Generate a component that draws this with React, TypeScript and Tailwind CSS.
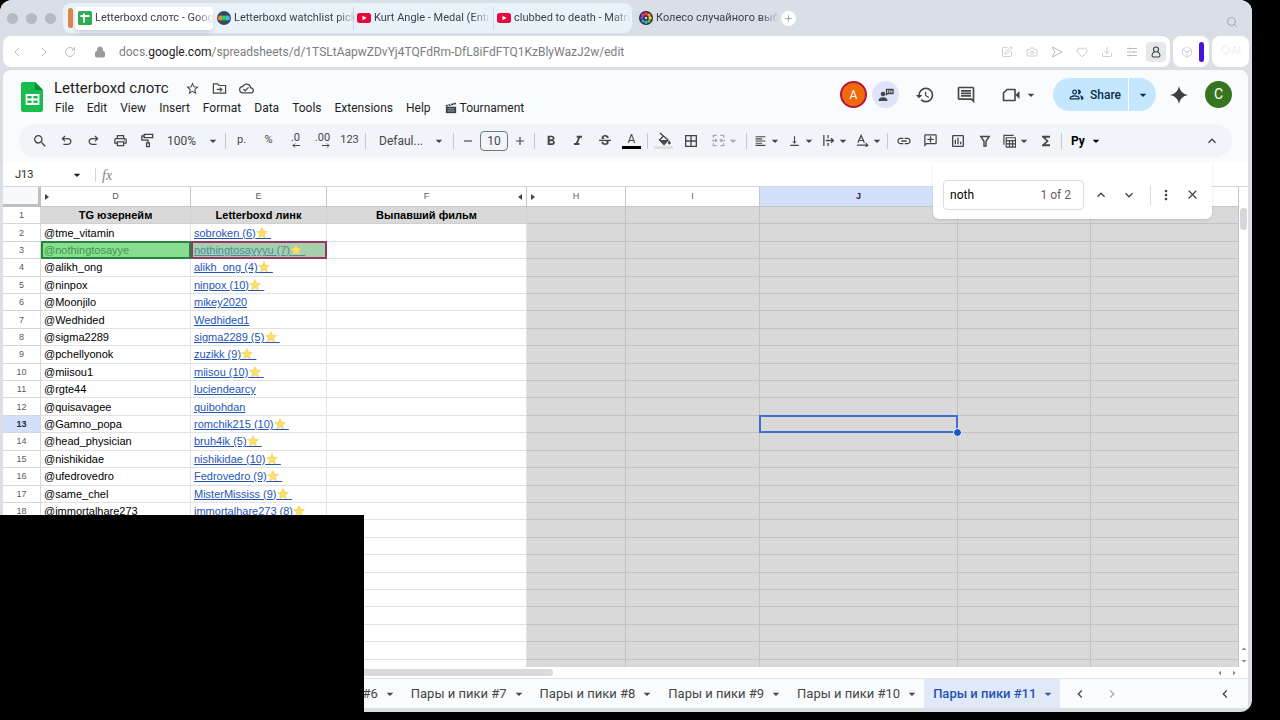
import React, { useState } from 'react';
import {
  MdArrowDropDown, MdBorderAll, MdClose, MdFormatAlignLeft, MdFormatBold, MdFormatItalic,
  MdFunctions, MdHistory, MdKeyboardArrowDown, MdKeyboardArrowUp, MdMoreVert, MdOutlineAddComment,
  MdOutlineCloudDone, MdOutlineInsertChart, MdOutlineInsertComment, MdOutlinePeopleAlt,
  MdOutlinePrint, MdSearch, MdStarOutline, MdStrikethroughS, MdVerticalAlignBottom, MdLink, MdChevronLeft,
  MdChevronRight, MdAdd, MdRemove,
} from 'react-icons/md';
import { Box, Camera, ChevronLeft, ChevronRight, Download, Heart, Lock, RotateCw, Search, SquarePen } from 'lucide-react';

type Row = { tg?: string; link?: string; star?: boolean };

const rows: Row[] = [
  { tg: '@tme_vitamin', link: 'sobroken (6)', star: true },
  { tg: '@nothingtosayye', link: 'nothingtosayyyu (7)', star: true },
  { tg: '@alikh_ong', link: 'alikh_ong (4)', star: true },
  { tg: '@ninpox', link: 'ninpox (10)', star: true },
  { tg: '@Moonjilo', link: 'mikey2020' },
  { tg: '@Wedhided', link: 'Wedhided1' },
  { tg: '@sigma2289', link: 'sigma2289 (5)', star: true },
  { tg: '@pchellyonok', link: 'zuzikk (9)', star: true },
  { tg: '@miisou1', link: 'miisou (10)', star: true },
  { tg: '@rgte44', link: 'luciendearcy' },
  { tg: '@quisavagee', link: 'quibohdan' },
  { tg: '@Gamno_popa', link: 'romchik215 (10)', star: true },
  { tg: '@head_physician', link: 'bruh4ik (5)', star: true },
  { tg: '@nishikidae', link: 'nishikidae (10)', star: true },
  { tg: '@ufedrovedro', link: 'Fedrovedro (9)', star: true },
  { tg: '@same_chel', link: 'MisterMississ (9)', star: true },
  { tg: '@immortalhare273', link: 'immortalhare273 (8)', star: true },
  {}, {}, {}, {}, {}, {}, {}, {}, {},
];

const menus = ['File', 'Edit', 'View', 'Insert', 'Format', 'Data', 'Tools', 'Extensions', 'Help'];
const sheets = ['Пары и пики #6', 'Пары и пики #7', 'Пары и пики #8', 'Пары и пики #9', 'Пары и пики #10', 'Пары и пики #11'];

const Star = () => (
  <svg viewBox="0 0 24 24" className="absolute right-[3px] top-0 h-3 w-3">
    <path d="M12 1l3.2 7.2 7.8.8-5.900 5.200 1.700 7.800L12 18l-6.800 4 1.700-7.800L1 9l7.800-.8z" fill="#fbe06a" stroke="#ecc956" strokeWidth="1" />
  </svg>
);

const YouTube = () => (
  <svg viewBox="0 0 14 10" className="h-[10px] w-[14px] shrink-0">
    <rect width="14" height="10" rx="2.500" fill="#e5083c" />
    <path d="M5.500 2.700v4.600l4-2.300z" fill="#fff" />
  </svg>
);

const SheetsFavicon = () => (
  <svg viewBox="0 0 14 14" className="h-[14px] w-[14px] shrink-0">
    <rect width="14" height="14" rx="1.500" fill="#2fae55" />
    <path d="M2.500 5h9M6 2.500v9" stroke="#fff" strokeWidth="1.800" />
  </svg>
);

const LetterboxdIcon = () => (
  <svg viewBox="0 0 14 14" className="h-[14px] w-[14px] shrink-0">
    <circle cx="7" cy="7" r="7" fill="#3d4a5e" />
    <circle cx="3.600" cy="7" r="2.500" fill="#f28a2c" />
    <circle cx="10.400" cy="7" r="2.500" fill="#3fb6ee" />
    <circle cx="7" cy="7" r="2.500" fill="#26d05c" />
  </svg>
);

const wheelColors = ['#e8413c', '#f29a2e', '#f4dd3a', '#5cc04a', '#36b5a2', '#3a8ee0', '#6a4bd0', '#d63fae'];
const WheelIcon = () => (
  <svg viewBox="0 0 14 14" className="h-[14px] w-[14px] shrink-0">
    <circle cx="7" cy="7" r="7" fill="#2a2530" />
    {wheelColors.map((c, i) => (
      <circle key={c} cx="7" cy="2.800" r="1.700" fill={c} transform={`rotate(${i * 45} 7 7)`} />
    ))}
    <circle cx="7" cy="7" r="1.300" fill="#d8d8d8" />
  </svg>
);

const SheetsLogo = () => (
  <svg viewBox="0 0 22 30" className="h-[30px] w-[22px]">
    <path d="M2 0h12l8 8v20a2 2 0 0 1-2 2H2a2 2 0 0 1-2-2V2a2 2 0 0 1 2-2z" fill="#17bd4d" />
    <path d="M14 0l8 8h-8z" fill="#0b8f38" />
    <path d="M5.500 13h12v9h-12zM5.500 17.500h12M11.500 13v9" fill="none" stroke="#fff" strokeWidth="1.800" />
  </svg>
);

const MoveFolder = () => (
  <svg viewBox="0 0 16 16" fill="none" stroke="currentColor" strokeWidth="1.300" className="h-[15px] w-[15px]">
    <path d="M1.500 3h4.500l1.500 1.800h7V13h-13zM5 9h5.500M8.500 7l2 2-2 2" />
  </svg>
);

const Clapper = () => (
  <svg viewBox="0 0 14 14" className="h-3 w-3">
    <path d="M1 5.500h12V13H1z" fill="#3c4043" />
    <path d="M.6 3.800L12.400.6l.6 2L1.200 5.600z" fill="#3c4043" />
    <path d="M3 3.200l1.500 1.500M6 2.400l1.500 1.500M9 1.600l1.500 1.500" stroke="#fff" strokeWidth="1" />
    <path d="M3 8h8M3 10.500h8" stroke="#c8ccd0" strokeWidth=".8" />
  </svg>
);

const Undo = ({ flip }: { flip?: boolean }) => (
  <svg viewBox="0 -960 960 960" fill="currentColor" className={`h-[15px] w-[15px] ${flip ? '-scale-x-100' : ''}`}>
    <path d="M280-200v-80h284q63 0 109.500-40T720-420q0-60-46.500-100T564-560H312l104 104-56 56-200-200 200-200 56 56-104 104h252q97 0 169.500 63T800-420q0 94-72.500 157T564-200H280Z" />
  </svg>
);

const Roller = () => (
  <svg viewBox="0 0 16 16" fill="none" stroke="currentColor" strokeWidth="1.400" className="h-[15px] w-[15px]">
    <path d="M4.500 1.500h9v3.500h-9zM4.500 3.200H2v4.300h6.500V10M7 10.500h3v4H7z" />
  </svg>
);

const Decimals = ({ text, more }: { text: string; more?: boolean }) => (
  <span className="flex flex-col items-end text-[11px] leading-[10px]">
    {text}
    <svg viewBox="0 0 8 5" fill="none" stroke="currentColor" className={`h-[5px] w-2 ${more ? '-scale-x-100' : ''}`}>
      <path d="M8 2.500H1M3 .5l-2 2 2 2" />
    </svg>
  </span>
);

const Bucket = () => (
  <svg viewBox="0 0 14 14" className="h-[14px] w-[14px]">
    <path d="M3 1l8 7-4 4.500L2.500 8 6.500 4" fill="none" stroke="currentColor" strokeWidth="1.400" />
    <path d="M3 8h7.500L7 12z" fill="currentColor" />
    <path d="M12.300 8.500c.9 1.200 1.400 1.800 1.400 2.500a1.400 1.400 0 0 1-2.800 0c0-.7.500-1.300 1.400-2.500z" fill="currentColor" />
  </svg>
);

const Merge = () => (
  <svg viewBox="0 0 14 14" fill="none" stroke="currentColor" strokeWidth="1.400" className="h-[13px] w-[13px]">
    <path d="M5 1.500H1.500V4M9 1.500h3.500V4M5 12.500H1.500V10M9 12.500h3.500V10M0 7h5M14 7H9M3.500 5.300L5.200 7 3.500 8.700M10.500 5.300L8.800 7l1.700 1.700" />
  </svg>
);

const Wrap = () => (
  <svg viewBox="0 0 14 14" fill="none" stroke="currentColor" strokeWidth="1.400" className="h-[13px] w-[13px]">
    <path d="M2 1v12M6.500 1v3.500M6.500 9.500V13M4 7h8M9.800 4.500L12.300 7 9.800 9.500" />
  </svg>
);

const Rotate = () => (
  <svg viewBox="0 0 14 14" fill="none" stroke="currentColor" strokeWidth="1.300" className="h-[13px] w-[13px]">
    <path d="M2 9.500L5.500 1.500 9 9.500M3.200 7h4.600M1 12h11.500M10.500 9.800L12.700 12l-2.200 2" />
  </svg>
);

const Funnel = () => (
  <svg viewBox="0 0 14 14" fill="none" stroke="currentColor" strokeWidth="1.400" className="h-[14px] w-[14px]">
    <path d="M2.800 2.500h8.400L8 7.300V12H6V7.300z" />
  </svg>
);

const TableViews = () => (
  <svg viewBox="0 0 14 14" fill="none" stroke="currentColor" strokeWidth="1.300" className="h-[14px] w-[14px]">
    <path d="M1 11V1h10.500M3.500 3.500h10v10h-10zM3.500 6.500h10M3.500 10h10M7 6.500v7M10.300 6.500v7" />
  </svg>
);

const VideoCall = () => (
  <svg viewBox="0 0 18 16" className="h-4 w-[18px]">
    <path d="M5 2.500h8v11H1.500V6z" fill="none" stroke="currentColor" strokeWidth="1.600" strokeLinejoin="round" />
    <path d="M13.500 8L17.500 4v8z" fill="currentColor" />
  </svg>
);

const MeetPeople = () => (
  <svg viewBox="0 0 16 14" fill="currentColor" className="h-[14px] w-4">
    <circle cx="5" cy="6" r="2.300" />
    <path d="M.5 13c0-2.800 2-3.800 4.500-3.800s4.500 1 4.500 3.800z" />
    <path d="M8.500 1.500h6.500v4h-5l-1.500 1z" fill="none" stroke="currentColor" strokeWidth="1.300" />
    <path d="M10.700 2v3M12.800 2v3" stroke="currentColor" />
  </svg>
);

const Send = () => (
  <svg viewBox="0 0 12 12" fill="none" stroke="currentColor" strokeLinejoin="round" className="h-3 w-3">
    <path d="M1.500 1L11 6l-9.500 5L3.500 6z" />
  </svg>
);

const Tune = () => (
  <svg viewBox="0 0 12 12" fill="none" stroke="currentColor" className="h-3 w-3">
    <path d="M1 2.500h10M1 6h10M1 9.500h10M4 1.500v2M8 5v2M4 8.500v2" />
  </svg>
);

const Person = () => (
  <svg viewBox="0 0 12 12" fill="none" stroke="currentColor" strokeWidth="1.100" className="h-3 w-3">
    <circle cx="6" cy="3.500" r="2.500" />
    <path d="M4.500 5.700C2.700 6.500 2 8 2 9.500c0 1 .6 1.500 1.500 1.500h5c.9 0 1.500-.5 1.500-1.500 0-1.500-.7-3-2.500-3.800" />
  </svg>
);

const Arrow = () => <MdArrowDropDown className="h-4 w-4 shrink-0" />;

const Sep = () => <span className="mx-[2px] h-4 w-px shrink-0 bg-[#c7c9cc]" />;

const Tool = ({ label, children }: { label: string; children: React.ReactNode }) => (
  <button aria-label={label} className="flex h-[27px] w-[27px] shrink-0 items-center justify-center text-[11px]">
    {children}
  </button>
);

const ToolMenu = ({ label, children }: { label: string; children: React.ReactNode }) => (
  <button aria-label={label} className="flex h-[27px] w-[34px] shrink-0 items-center justify-between pl-[5px]">
    {children}
    <Arrow />
  </button>
);

const BrowserTab = ({ icon, title, active }: { icon: React.ReactNode; title: string; active?: boolean }) => (
  <button className={`flex h-[23px] w-[138px] shrink-0 items-center gap-[3px] rounded px-[3px] text-[11px] text-[#3a3f47] ${active ? 'bg-white shadow-md' : ''}`}>
    {icon}
    <span className="whitespace-nowrap text-left [mask-image:linear-gradient(to_right,black_85%,transparent)]">{title}</span>
  </button>
);

const Browser = () => (
  <div>
    <div className="flex h-9 items-center bg-[#d8dfe7] pl-[7px] pr-[14px]">
      <div className="flex gap-2">
        <span className="h-[11px] w-[11px] rounded-full bg-[#b3bac6]" />
        <span className="h-[11px] w-[11px] rounded-full bg-[#b3bac6]" />
        <span className="h-[11px] w-[11px] rounded-full bg-[#b3bac6]" />
      </div>
      <div className="ml-[7px] flex h-[30px] items-center gap-px rounded-lg bg-[#e9f2fb] pl-[5px]">
        <span className="mr-px h-5 w-[5px] rounded-sm bg-[#dd8448]" />
        <BrowserTab active icon={<SheetsFavicon />} title="Letterboxd слотс - Goog" />
        <BrowserTab icon={<LetterboxdIcon />} title="Letterboxd watchlist pick" />
        <div className="border-l border-[#cdd5dd]">
          <BrowserTab icon={<YouTube />} title="Kurt Angle - Medal (Entr" />
        </div>
        <div className="border-l border-[#cdd5dd]">
          <BrowserTab icon={<YouTube />} title="clubbed to death - Matri" />
        </div>
      </div>
      <div className="ml-1">
        <BrowserTab icon={<WheelIcon />} title="Колесо случайного выб" />
      </div>
      <button aria-label="New tab" className="ml-[7px] flex h-[15px] w-[15px] items-center justify-center rounded-full bg-white text-[#9aa0a6]">
        <MdAdd className="h-[11px] w-[11px]" />
      </button>
      <Search className="ml-auto mt-2 h-3 w-3 text-[#a0a7b0]" strokeWidth={2} />
    </div>
    <div className="flex h-[34px] gap-[3px] bg-[#dcdee6] pb-[3px] pl-[3px] pr-[3px]">
      <div className="flex flex-1 items-center rounded-lg bg-white pl-[6px] pr-1 text-[#b9bcc1]">
        <ChevronLeft className="mr-[11px] h-4 w-4" strokeWidth={1.5} />
        <ChevronRight className="mr-3 h-4 w-4" strokeWidth={1.5} />
        <RotateCw className="mr-[18px] h-3 w-3" strokeWidth={2} />
        <Lock className="mr-[13px] h-3 w-3 text-[#9a9a9a]" fill="#9a9a9a" />
        <span className="flex-1 text-[12px] text-[#7b7d80]">
          docs.<span className="text-[#202124]">google.com</span>/spreadsheets/d/1TSLtAapwZDvYj4TQFdRm-DfL8iFdFTQ1KzBlyWazJ2w/edit
        </span>
        <div className="flex items-center gap-[13px]">
          <SquarePen className="h-3 w-3" strokeWidth={1.5} />
          <Camera className="h-3 w-3" strokeWidth={1.5} />
          <Send />
          <Heart className="h-3 w-3" strokeWidth={1.5} />
          <Download className="h-3 w-3" strokeWidth={1.5} />
          <Tune />
        </div>
        <span className="ml-2 flex h-5 w-5 items-center justify-center rounded bg-[#e6e8ec] text-[#3c4043]">
          <Person />
        </span>
      </div>
      <div className="flex w-9 items-center justify-end gap-[6px] rounded-lg bg-white pr-[5px]">
        <Box className="h-3 w-3 text-[#c3c6ca]" strokeWidth={1.5} />
        <span className="h-5 w-[5px] rounded-sm bg-[#4a12e0]" />
      </div>
      <div className="flex w-[37px] items-center justify-center rounded-lg bg-white text-[11px] text-[#eeeeee]">◇AI</div>
    </div>
  </div>
);

const Header = () => (
  <header className="flex h-[54px] items-center pl-[18px] pr-4 text-[#1f1f1f]">
    <SheetsLogo />
    <div className="ml-[6px] flex flex-col pt-[2px]">
      <div className="flex h-5 items-center pl-[5px]">
        <h1 className="text-[15px] leading-5">Letterboxd слотс</h1>
        <div className="ml-4 flex items-center gap-3 text-[#444746]">
          <MdStarOutline className="h-[15px] w-[15px]" />
          <MoveFolder />
          <MdOutlineCloudDone className="h-[15px] w-[15px]" />
        </div>
      </div>
      <nav className="flex h-5 items-center gap-px text-[12px]">
        {menus.map((m) => (
          <button key={m} className="px-[6px]">{m}</button>
        ))}
        <button className="flex items-center gap-[3px] px-[7px]"><Clapper />Tournament</button>
      </nav>
    </div>
    <div className="ml-auto flex items-center pb-[5px] text-[#444746]">
      <span className="flex h-[27px] w-[27px] items-center justify-center rounded-full border-2 border-[#b4123f] bg-[#ee6a0c] text-[12px] text-white">A</span>
      <button aria-label="People here" className="ml-[5px] flex h-[27px] w-[27px] items-center justify-center rounded-full bg-[#dfe4f8]"><MeetPeople /></button>
      <button aria-label="History" className="ml-4"><MdHistory className="h-5 w-5" /></button>
      <button aria-label="Comments" className="ml-[21px]"><MdOutlineInsertComment className="h-5 w-5" /></button>
      <button aria-label="Meet" className="ml-[26px] flex items-center gap-[3px]"><VideoCall /><Arrow /></button>
      <div className="ml-[14px] flex h-[33px] rounded-full bg-[#c5e7fe] text-[#0a2f4e]">
        <button className="flex w-[76px] items-center justify-end gap-[6px] border-r border-white pr-[7px] text-[12px] font-medium">
          <MdOutlinePeopleAlt className="h-[15px] w-[15px]" />Share
        </button>
        <button aria-label="Share options" className="flex w-[27px] items-center justify-center"><Arrow /></button>
      </div>
      <svg viewBox="0 0 18 18" className="ml-[14px] h-[18px] w-[18px]" fill="#3c4043">
        <path d="M9 0c1 5.200 3.800 8 9 9-5.200 1-8 3.800-9 9-1-5.200-3.800-8-9-9 5.200-1 8-3.800 9-9z" />
      </svg>
      <span className="ml-[17px] flex h-[27px] w-[27px] items-center justify-center rounded-full bg-[#35761f] text-[14px] text-white">C</span>
    </div>
  </header>
);

const Toolbar = () => (
  <div className="mx-4 flex h-[33px] items-center rounded-full bg-[#f1f4f9] pl-[7px] text-[#444746]">
    <Tool label="Search the menus"><MdSearch className="h-4 w-4" /></Tool>
    <Tool label="Undo"><Undo /></Tool>
    <Tool label="Redo"><Undo flip /></Tool>
    <Tool label="Print"><MdOutlinePrint className="h-[15px] w-[15px]" /></Tool>
    <Tool label="Paint format"><Roller /></Tool>
    <button className="flex w-[62px] items-center justify-between pl-[6px] pr-[2px] text-[12px]">100%<Arrow /></button>
    <Sep />
    <Tool label="Currency">р.</Tool>
    <Tool label="Percent">%</Tool>
    <Tool label="Decrease decimals"><Decimals text=".0" /></Tool>
    <Tool label="Increase decimals"><Decimals text=".00" more /></Tool>
    <Tool label="Formats">123</Tool>
    <Sep />
    <button className="flex w-[83px] items-center justify-between pl-[11px] pr-1 text-[12px]">Defaul...<Arrow /></button>
    <Sep />
    <button aria-label="Decrease font size" className="flex w-6 justify-center"><MdRemove className="h-[14px] w-[14px]" /></button>
    <input aria-label="Font size" defaultValue="10" className="h-5 w-7 rounded border border-[#747775] text-center text-[12px]" />
    <button aria-label="Increase font size" className="flex w-6 justify-center"><MdAdd className="h-[14px] w-[14px]" /></button>
    <Sep />
    <Tool label="Bold"><MdFormatBold className="h-4 w-4" /></Tool>
    <Tool label="Italic"><MdFormatItalic className="h-4 w-4" /></Tool>
    <Tool label="Strikethrough"><MdStrikethroughS className="h-4 w-4" /></Tool>
    <Tool label="Text color"><span className="w-[19px] border-b-[3px] border-black text-center text-[12px] leading-[14px]">A</span></Tool>
    <Sep />
    <Tool label="Fill color"><span className="flex w-[19px] justify-center border-b-[3px] border-[#dfe1e4]"><Bucket /></span></Tool>
    <Tool label="Borders"><MdBorderAll className="h-4 w-4" /></Tool>
    <span className="flex w-10 justify-center text-[#a9acb0]"><ToolMenu label="Merge cells"><Merge /></ToolMenu></span>
    <Sep />
    <ToolMenu label="Horizontal align"><MdFormatAlignLeft className="h-4 w-4" /></ToolMenu>
    <ToolMenu label="Vertical align"><MdVerticalAlignBottom className="h-4 w-4" /></ToolMenu>
    <ToolMenu label="Text wrapping"><Wrap /></ToolMenu>
    <ToolMenu label="Text rotation"><Rotate /></ToolMenu>
    <Sep />
    <Tool label="Insert link"><MdLink className="h-4 w-4" /></Tool>
    <Tool label="Insert comment"><MdOutlineAddComment className="h-[15px] w-[15px] -scale-x-100" /></Tool>
    <Tool label="Insert chart"><MdOutlineInsertChart className="h-4 w-4" /></Tool>
    <Tool label="Filter"><Funnel /></Tool>
    <ToolMenu label="Table views"><TableViews /></ToolMenu>
    <Tool label="Functions"><MdFunctions className="h-4 w-4" /></Tool>
    <Sep />
    <button className="ml-[7px] flex items-center gap-[3px] text-[12px] font-bold text-black">Py<Arrow /></button>
    <button aria-label="Hide the menus" className="ml-auto pr-3"><MdKeyboardArrowUp className="h-4 w-4" /></button>
  </div>
);

const FindBar = () => {
  const [query, setQuery] = useState('noth');

  return (
    <div className="absolute right-9 top-[92px] z-20 flex h-[57px] w-[279px] items-center rounded-b-md bg-white pl-[10px] pr-3 pt-2 text-[#444746] shadow">
      <label className="flex h-[30px] w-[141px] items-center rounded border border-[#dadce0] px-[6px] text-[12px]">
        <input aria-label="Find in sheet" value={query} onChange={(e) => setQuery(e.target.value)} className="w-16 text-black outline-none" />
        <span className="ml-auto pr-[6px] text-[#5f6368]">1 of 2</span>
      </label>
      <button aria-label="Previous" className="ml-[9px]"><MdKeyboardArrowUp className="h-4 w-4" /></button>
      <button aria-label="Next" className="ml-3"><MdKeyboardArrowDown className="h-4 w-4" /></button>
      <span className="ml-[13px] h-5 w-px bg-[#dadce0]" />
      <button aria-label="More options" className="ml-[7px]"><MdMoreVert className="h-4 w-4" /></button>
      <button aria-label="Close" className="ml-auto"><MdClose className="h-[15px] w-[15px]" /></button>
    </div>
  );
};

const head = 'relative border-b border-r border-[#c4c7c5] bg-white p-0 text-[9px] font-normal text-[#575b5f]';
const rowHead = 'border-b border-r border-[#d5d7da] p-0 text-center text-[9px] leading-[14px]';
const cell = 'relative whitespace-nowrap border-b border-r border-[#e1e1e1] p-0 pl-[3px] leading-[14px]';
const gray = 'relative border-b border-r border-[#c3c3c3] bg-[#d9d9d9] p-0';
const title = 'border-b border-r border-[#d0d0d0] bg-[#d9d9d9] p-0 text-center font-bold leading-[14px]';
const tri = 'absolute top-[7px] h-[6px] w-1 fill-[#444746]';

const Grid = () => (
  <div className="flex min-h-0 flex-1">
    <div className="min-w-0 flex-1 overflow-hidden">
      <table className="h-[490px] w-full table-fixed border-separate border-spacing-0 font-['Liberation_Sans',Arial,sans-serif] text-[11px] text-black">
        <colgroup>
          <col className="w-[38px]" />
          <col className="w-[150px]" />
          <col className="w-[136px]" />
          <col className="w-[200px]" />
          <col className="w-[99px]" />
          <col className="w-[134px]" />
          <col className="w-[198px]" />
          <col className="w-[133px]" />
          <col />
        </colgroup>
        <thead>
          <tr className="h-5">
            <th className="border-b-[3px] border-r-[3px] border-[#bdbfc2] bg-[#f8f9fa] p-0" />
            <th className={head}>D<svg viewBox="0 0 4 6" className={`${tri} left-1`}><path d="M0 0l4 3-4 3z" /></svg></th>
            <th className={head}>E</th>
            <th className={head}>F<svg viewBox="0 0 4 6" className={`${tri} right-1`}><path d="M4 0L0 3l4 3z" /></svg></th>
            <th className={head}><svg viewBox="0 0 4 6" className={`${tri} left-1`}><path d="M0 0l4 3-4 3z" /></svg>H</th>
            <th className={head}>I</th>
            <th className="border-b border-r border-[#c4c7c5] bg-[#d3e0fb] p-0 text-[9px] font-bold text-[#1b2a4a]">J</th>
            <th className={head}>K</th>
            <th className={head}>L</th>
          </tr>
        </thead>
        <tbody>
          <tr>
            <td className={`${rowHead} bg-white text-[#575b5f]`}>1</td>
            <td className={title}>TG юзернейм</td>
            <td className={title}>Letterboxd линк</td>
            <td className={title}>Выпавший фильм</td>
            <td className={gray} /><td className={gray} /><td className={gray} /><td className={gray} /><td className={gray} />
          </tr>
          {rows.map((row, i) => {
            const n = i + 2;
            const found = n === 3;
            return (
              <tr key={n}>
                <td className={`${rowHead} ${n === 13 ? 'bg-[#d3e0fb] font-bold text-[#1b2a4a]' : 'bg-white text-[#575b5f]'}`}>{n}</td>
                <td className={`${cell} ${found ? 'bg-[#88de90] text-[#3c9a48]' : 'bg-white'}`}>
                  {row.tg}
                  {found && <span className="absolute -right-px -top-px bottom-[-1px] left-0 z-10 border-2 border-[#23863c]" />}
                </td>
                <td className={`${cell} ${found ? 'bg-[#a6d0ab]' : 'bg-white'}`}>
                  {row.link && (
                    <a href="#" className={`relative underline ${found ? 'text-[#4c8ba3]' : 'text-[#1f55b5]'}`}>
                      {row.link}
                      {row.star && <>{'\u00a0\u00a0\u00a0\u00a0\u00a0'}<Star /></>}
                    </a>
                  )}
                  {found && <span className="absolute -right-px -top-px bottom-[-1px] left-0 border-2 border-[#96356a]" />}
                </td>
                <td className={`${cell} bg-white`} />
                <td className={gray} />
                <td className={gray} />
                <td className={gray}>
                  {n === 13 && (
                    <span className="absolute -bottom-px -left-px -right-px -top-px z-10 border-2 border-[#3f6fd1]">
                      <span className="absolute -bottom-[6px] -right-[6px] h-[9px] w-[9px] rounded-full border border-white bg-[#1a56c4]" />
                    </span>
                  )}
                </td>
                <td className={gray} />
                <td className={gray} />
              </tr>
            );
          })}
        </tbody>
      </table>
    </div>
    <div className="flex w-[9px] flex-col items-center bg-white pt-[21px]">
      <span className="h-[22px] w-[7px] rounded-full bg-[#d5d7da]" />
      <MdArrowDropDown className="mt-auto h-3 w-3 rotate-180 text-[#8a8d91]" />
      <MdArrowDropDown className="h-3 w-3 text-[#8a8d91]" />
    </div>
  </div>
);

const SheetTabs = () => {
  const [active, setActive] = useState(5);

  return (
    <footer className="flex h-[30px] items-stretch border-t border-[#e1e3e6] bg-[#f9fbfd] pl-[270px] text-[13px] text-[#444746]">
      {sheets.map((s, i) => (
        <button
          key={s}
          onClick={() => setActive(i)}
          className={`flex shrink-0 items-center gap-1 pl-[9px] pr-1 pt-px ${i === active ? 'bg-[#e1e8f7] font-medium text-[#1f55b5]' : ''}`}
        >
          {s}
          <Arrow />
        </button>
      ))}
      <button aria-label="Scroll left" className="ml-3"><MdChevronLeft className="h-4 w-4" /></button>
      <button aria-label="Scroll right" className="ml-4 text-[#a9acb0]"><MdChevronRight className="h-4 w-4" /></button>
      <button aria-label="Show side panel" className="ml-auto pr-[15px]"><MdChevronLeft className="h-4 w-4" /></button>
    </footer>
  );
};

export default function App() {
  return (
    <div className="relative h-screen bg-black pb-2 pr-7 font-[Roboto,Inter,sans-serif]">
      <div className="flex h-full flex-col overflow-hidden rounded-xl bg-[#dcdee6]">
        <Browser />
        <main className="relative mb-1 ml-[3px] mr-1 flex min-h-0 flex-1 flex-col rounded-t-lg bg-[#f9fbfd]">
          <Header />
          <Toolbar />
          <div className="mt-[5px] flex h-[25px] items-center border-b border-[#d5d7da] bg-white pl-3 pt-[2px] text-[11px] text-[#1f1f1f]">
            <span className="w-[54px]">J13</span>
            <Arrow />
            <span className="ml-[10px] h-[14px] w-px bg-[#d5d7da]" />
            <span className="ml-[6px] font-['Liberation_Serif',serif] text-[14px] italic text-[#80868b]">fx</span>
          </div>
          <Grid />
          <div className="flex h-[11px] items-center bg-white pr-2">
            <span className="h-[7px] w-[550px] rounded-full bg-[#d8dadc]" />
            <MdArrowDropDown className="ml-auto h-3 w-3 rotate-90 text-[#8a8d91]" />
            <MdArrowDropDown className="ml-[2px] h-3 w-3 -rotate-90 text-[#8a8d91]" />
          </div>
          <SheetTabs />
          <FindBar />
        </main>
      </div>
      <div className="absolute bottom-0 left-0 z-30 h-[205px] w-[364px] bg-black" />
    </div>
  );
}
